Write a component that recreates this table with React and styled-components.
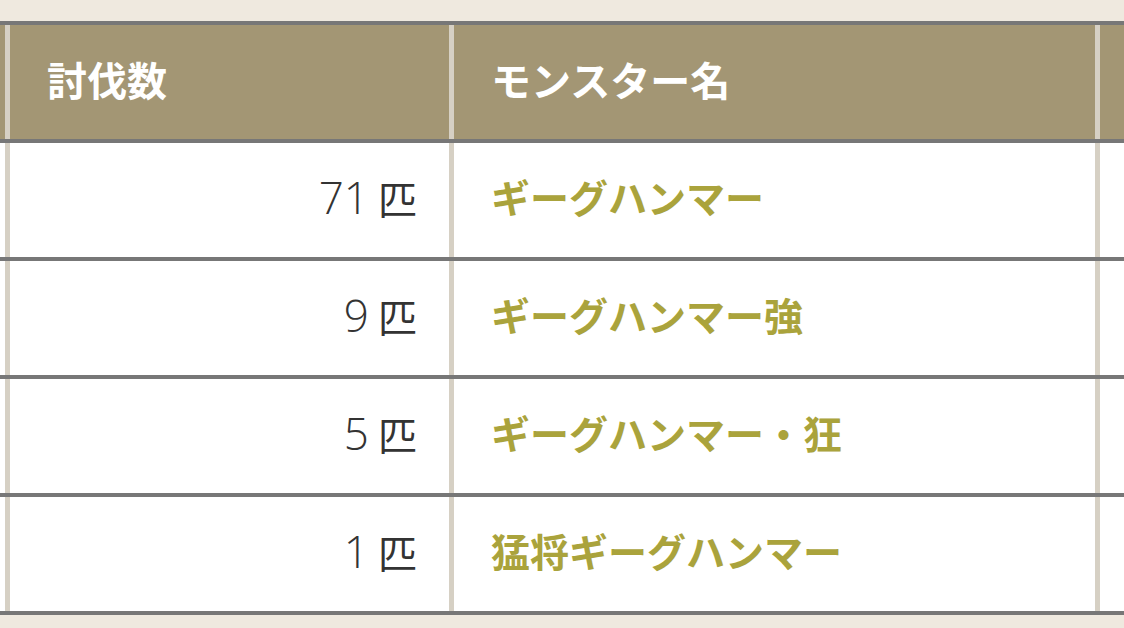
import React from 'react'
import styled, { createGlobalStyle } from 'styled-components'

const GlobalStyle = createGlobalStyle`
  html, body {
    margin: 0;
    padding: 0;
    background: #efe9df;
  }
  body {
    font-family: 'Noto Sans CJK JP', 'Noto Sans', sans-serif;
  }
`

const rows = [
  { count: '71', name: 'ギーグハンマー' },
  { count: '9', name: 'ギーグハンマー強' },
  { count: '5', name: 'ギーグハンマー・狂' },
  { count: '1', name: '猛将ギーグハンマー' },
]

const Viewport = styled.div`
  width: 1124px;
  height: 628px;
  overflow: hidden;
  padding-top: 21px;
  box-sizing: border-box;
`

const Table = styled.div`
  margin-left: -100px;
  width: 1500px;
  border-top: 4px solid #777777;
`

const Row = styled.div`
  display: grid;
  grid-template-columns: 110px 444px 646px 300px;
  height: 118px;
  box-sizing: border-box;
  border-bottom: 4px solid #777777;
  background: ${(p) => (p.$head ? '#a39674' : '#ffffff')};
`

const Cell = styled.div`
  display: flex;
  align-items: center;
  justify-content: ${(p) => (p.$right ? 'flex-end' : 'flex-start')};
  padding: ${(p) => (p.$right ? '0 32px 7px 0' : '0 0 7px 37px')};
  border-right: ${(p) => (p.$last ? 'none' : '5px solid #d6d0c4')};
  font-size: 39px;
  line-height: 1;
  white-space: nowrap;
`

const HeadText = styled.span`
  color: #ffffff;
  font-weight: 700;
  font-size: 40px;
`

const Count = styled.span`
  display: flex;
  align-items: baseline;
  color: #333333;
`

const Digits = styled.span`
  font-family: 'Open Sans', 'Noto Sans', sans-serif;
  font-weight: 300;
  font-size: 44px;
`

const Unit = styled.span`
  margin-left: 9px;
  font-weight: 400;
`

const Name = styled.span`
  color: #aaa33c;
  font-weight: 700;
`

export default function App() {
  return (
    <>
      <GlobalStyle />
      <Viewport>
        <Table>
          <Row $head>
            <Cell />
            <Cell>
              <HeadText>討伐数</HeadText>
            </Cell>
            <Cell>
              <HeadText>モンスター名</HeadText>
            </Cell>
            <Cell $last />
          </Row>
          {rows.map((r) => (
            <Row key={r.name}>
              <Cell />
              <Cell $right>
                <Count>
                  <Digits>{r.count}</Digits>
                  <Unit>匹</Unit>
                </Count>
              </Cell>
              <Cell>
                <Name>{r.name}</Name>
              </Cell>
              <Cell $last />
            </Row>
          ))}
        </Table>
      </Viewport>
    </>
  )
}
